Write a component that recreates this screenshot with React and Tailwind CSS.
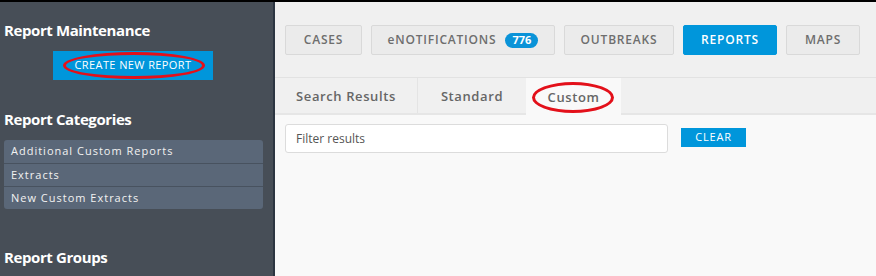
import React from 'react';

const font = { fontFamily: '"Open Sans", "Noto Sans", sans-serif' };

function Ring({ className }) {
  // red hand-drawn style annotation ellipse
  return (
    <span
      className={`pointer-events-none absolute rounded-[50%] border-[3px] border-[#e3101a] ${className}`}
    />
  );
}

function NavButton({ label, width, active, badge }) {
  return (
    <div
      className={`flex h-[30px] items-center justify-center gap-[9px] rounded-[2px] border text-[12px] font-semibold tracking-[0.8px] ${width} ${
        active
          ? 'border-[#0096db] bg-[#0096db] text-white'
          : 'border-[#d9d9d9] bg-[#ebebeb] text-[#6e6e6e]'
      }`}
    >
      <span>{label}</span>
      {badge && (
        <span className="flex h-[15px] w-[33px] items-center justify-center rounded-full bg-[#0a93d8] text-[11px] font-bold tracking-normal text-white">
          {badge}
        </span>
      )}
    </div>
  );
}

export default function App() {
  const categories = ['Additional Custom Reports', 'Extracts', 'New Custom Extracts'];

  return (
    <div className="flex h-[276px] w-[876px] overflow-hidden border-t-2 border-black" style={font}>
      {/* Sidebar */}
      <aside className="flex w-[275px] shrink-0 flex-col border-r-2 border-[#2c3541] bg-[#474e57] pl-[4px] text-white">
        <h2 className="pt-[18px] text-[15px] font-bold leading-[20px] tracking-[-0.4px]">Report Maintenance</h2>
        <div className="relative mt-[11px] ml-[49px] flex h-[29px] w-[160px] items-center justify-center bg-[#0096db] text-[11px] tracking-[0.4px] text-white">
          CREATE NEW REPORT
          <Ring className="left-[10px] top-[1px] h-[27px] w-[142px]" />
        </div>
        <h2 className="mt-[29px] text-[15px] font-bold leading-[20px] tracking-[-0.4px]">Report Categories</h2>
        <ul className="mt-[11px] w-[259px] overflow-hidden rounded-[3px] bg-[#5a6778]">
          {categories.map((c, i) => (
            <li
              key={c}
              className={`flex h-[23px] items-center pl-[7px] text-[11px] tracking-[1px] text-[#f2f2f2] ${
                i > 0 ? 'border-t border-[#48525f]' : ''
              }`}
            >
              {c}
            </li>
          ))}
        </ul>
        <h2 className="mt-[38px] text-[15px] font-bold leading-[20px] tracking-[-0.4px]">Report Groups</h2>
      </aside>

      {/* Main */}
      <main className="flex flex-1 flex-col bg-[#f0f0f0]">
        <nav className="flex gap-[9px] pl-[10px] pt-[23px]">
          <NavButton label="CASES" width="w-[77px]" />
          <NavButton label="eNOTIFICATIONS" width="w-[184px]" badge="776" />
          <NavButton label="OUTBREAKS" width="w-[110px]" />
          <NavButton label="REPORTS" width="w-[94px]" active />
          <NavButton label="MAPS" width="w-[74px]" />
        </nav>

        <div className="mt-[22px] flex h-[38px] border-t border-[#e2e2e2] border-b-2 border-b-[#e6e6e6] bg-[#f0f0f0]">
          <div className="flex w-[143px] items-center justify-center border-r border-[#e4e4e4] pt-[2px] text-[13px] font-semibold tracking-[0.6px] text-[#666]">
            Search Results
          </div>
          <div className="flex w-[108px] items-center justify-center pt-[2px] text-[13px] font-semibold tracking-[0.6px] text-[#666]">
            Standard
          </div>
          <div className="relative -mb-[2px] flex w-[95px] items-center justify-center bg-[#f9f9f9] pt-[2px] text-[13px] font-semibold tracking-[0.6px] text-[#666]">
            Custom
            <Ring className="left-[6px] top-[4px] h-[31px] w-[82px]" />
          </div>
        </div>

        <div className="flex flex-1 items-start gap-[13px] bg-[#f9f9f9] pl-[10px] pt-[9px]">
          <div className="flex h-[29px] w-[383px] items-center rounded-[3px] border border-[#dcdcdc] bg-white pl-[10px] text-[12px] text-[#555]">
            Filter results
          </div>
          <button className="mt-[4px] flex h-[19px] w-[65px] items-center justify-center bg-[#0096db] text-[11px] tracking-[0.8px] text-white">
            CLEAR
          </button>
        </div>
      </main>
    </div>
  );
}
